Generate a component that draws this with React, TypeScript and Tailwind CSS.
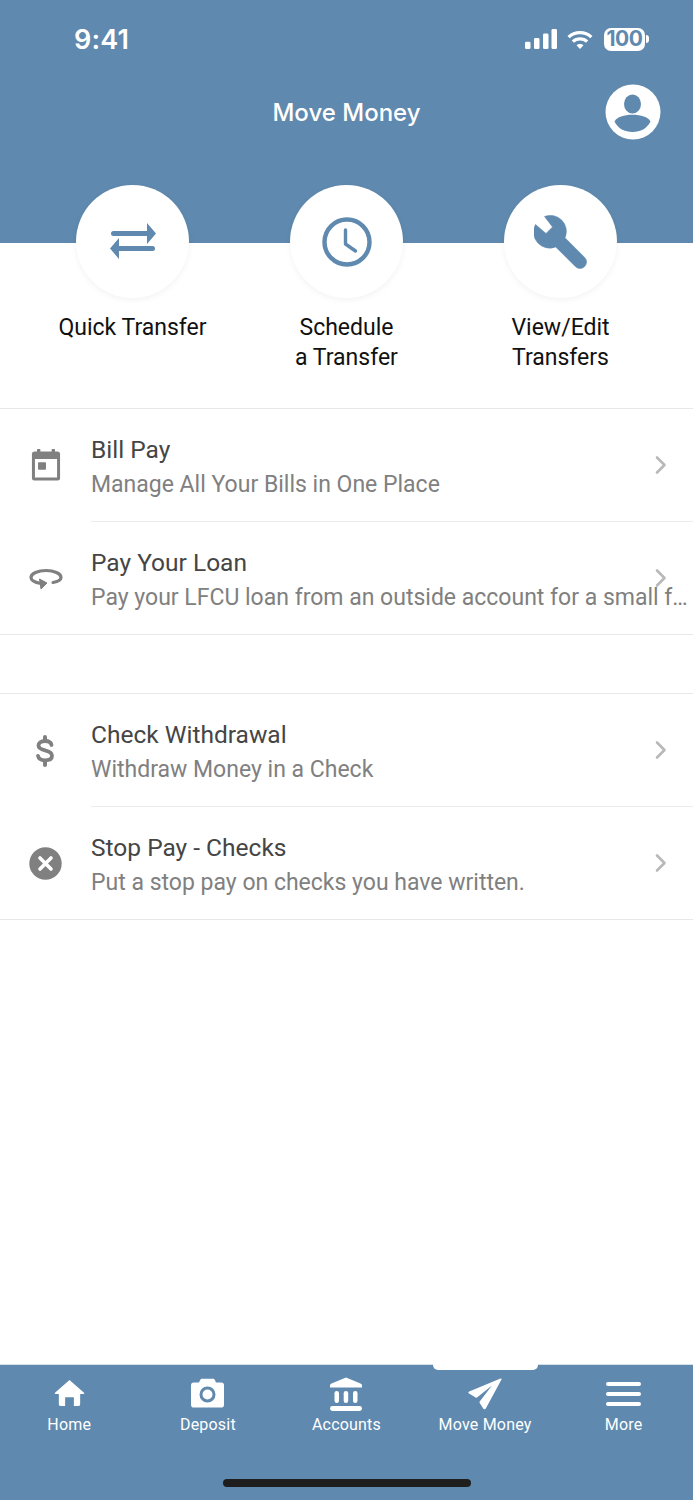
import React from "react";

const Chevron = ({ className = "" }: { className?: string }) => (
  <svg width="14" height="20" viewBox="0 0 14 20" className={className} fill="none" stroke="#b9b9b9" strokeWidth="2.6" strokeLinecap="round" strokeLinejoin="round">
    <path d="M3 2.5 L10.5 10 L3 17.5" />
  </svg>
);

const CalendarIcon = () => (
  <svg width="30" height="33" viewBox="0 0 32 34" className="-mt-[3px]">
    <path fill="#808080" fillRule="evenodd" d="M7 0.5h2.4a.6.6 0 0 1 .6.6V3h12V1.1a.6.6 0 0 1 .6-.6H25a.6.6 0 0 1 .6.6V3h3A2.6 2.6 0 0 1 31 5.6v26A2.4 2.4 0 0 1 28.6 34H3.4A2.4 2.4 0 0 1 1 31.6v-26A2.6 2.6 0 0 1 3.4 3h3V1.1a.6.6 0 0 1 .6-.6ZM4.2 11v19.8h23.6V11H4.2Z" />
    <rect x="7.5" y="14.5" width="8.5" height="8" rx="1" fill="#808080" />
  </svg>
);

const LoopIcon = () => (
  <svg width="34" height="22" viewBox="0 0 34 22" fill="none" className="mt-[2px]">
    <path d="M24 14.500C29 13.500 32 11.500 32 9.500 32 5.500 25 2.500 17 2.500S2 5.500 2 9.500C2 12.500 6 14.500 12 15.500" stroke="#808080" strokeWidth="3.200" strokeLinecap="round" />
    <path d="M10.500 11 L18 15 L12 21 Z" fill="#808080" stroke="#808080" strokeWidth="1" strokeLinejoin="round" />
  </svg>
);

const DollarIcon = () => (
  <svg width="20" height="32" viewBox="0 0 20 32" fill="none" className="mr-[2px]">
    <path d="M16.500 10C16 7.300 13.500 6 10 6 6 6 3.500 7.800 3.500 10.500c0 2.700 2.500 3.900 6.500 4.800 4.400 1 7 2.400 7 5.400 0 2.900-2.800 4.600-7 4.600-3.800 0-6.500-1.600-7-4.500" stroke="#808080" strokeWidth="3.800" strokeLinecap="round" />
    <path d="M10 2v4M10 26v4" stroke="#808080" strokeWidth="4" strokeLinecap="round" />
  </svg>
);

const CloseCircleIcon = () => (
  <svg width="33" height="33" viewBox="0 0 33 33">
    <circle cx="16.500" cy="16.500" r="16.200" fill="#808080" />
    <path d="M11 11 L22 22 M22 11 L11 22" stroke="#fff" strokeWidth="3.600" strokeLinecap="round" />
  </svg>
);

const TransferIcon = () => (
  <svg width="50" height="38" viewBox="0 0 48 38" fill="#5f89ae" className="-mt-[2px]">
    <rect x="2" y="9" width="40" height="5" rx="2.500" />
    <path d="M38 1 L47 11.500 L38 22 Z" strokeLinejoin="round" />
    <rect x="6" y="24" width="40" height="5" rx="2.500" />
    <path d="M10 16 L1 26.500 L10 37 Z" strokeLinejoin="round" />
  </svg>
);

const ClockIcon = () => (
  <svg width="50" height="50" viewBox="0 0 50 50" fill="none" stroke="#5f89ae">
    <circle cx="25" cy="25" r="22.500" strokeWidth="4.400" />
    <path d="M23.500 13 V27 L33.500 34" strokeWidth="3.400" strokeLinecap="round" strokeLinejoin="round" />
  </svg>
);

const WrenchIcon = () => (
  <svg width="54" height="54" viewBox="0 0 54 54" fill="#5f89ae">
    <path d="M10.500 1.500A16 16 0 0 1 31 22.800L50.600 42.400A6.500 6.500 0 0 1 41.400 51.600L21.700 31.900A16 16 0 0 1 1.500 9.500L12 18.500 18.500 12Z" stroke="#5f89ae" strokeWidth="0.600" strokeLinejoin="round" />
  </svg>
);

const UserAvatar = () => (
  <svg width="56" height="56" viewBox="0 0 56 56">
    <circle cx="28" cy="28" r="27.500" fill="#fff" />
    <ellipse cx="27.500" cy="20" rx="8.500" ry="9.500" fill="#5f89ae" />
    <path d="M9.500 37.500C12 33 19 30.800 27.500 30.800S43 33 45.500 37.500C42 44.500 35.500 48 27.500 48S13 44.500 9.500 37.500Z" fill="#5f89ae" />
  </svg>
);

const HomeIcon = () => (
  <svg width="31" height="28" viewBox="0 0 32 28" fill="#fff" className="-mt-[2px]">
    <path d="M16 .5 31 13.800c.5.500.2 1.200-.5 1.200H27v10.500A2 2 0 0 1 25 27.500h-4.500V18.500h-9v9H7a2 2 0 0 1-2-2V15H1.500C.8 15 .5 14.300 1 13.800Z" />
  </svg>
);

const CameraIcon = () => (
  <svg width="33" height="30" viewBox="0 0 33 30" className="-mt-[2px]">
    <path fill="#fff" d="M11 .8h11c1 0 1.700.6 2 1.500L25 4.500h5.200A2.800 2.800 0 0 1 33 7.300v19.500a2.800 2.800 0 0 1-2.800 2.800H2.800A2.800 2.800 0 0 1 0 26.800V7.300a2.800 2.800 0 0 1 2.800-2.800H8l1-2.200c.3-.9 1-1.500 2-1.500Z" />
    <circle cx="16.500" cy="16.500" r="6.500" fill="none" stroke="#5f89ae" strokeWidth="3" />
  </svg>
);

const BankIcon = () => (
  <svg width="32" height="34" viewBox="0 0 32 34" fill="#fff">
    <path d="M16 .5 30.500 6.500c1 .5 1.500 1 1.500 2.200v1.800H0V8.700c0-1.200.5-1.700 1.500-2.200Z" />
    <rect x="4.500" y="14" width="4.500" height="12" rx="2.200" />
    <rect x="13.700" y="14" width="4.500" height="12" rx="2.200" />
    <rect x="23" y="14" width="4.500" height="12" rx="2.200" />
    <rect x="0" y="29" width="32" height="5" rx="2.400" />
  </svg>
);

const SendIcon = () => (
  <svg width="34" height="32" viewBox="0 0 34 32" fill="#fff">
    <path d="M32.500.5c.8-.2 1.300.4 1 1.100L17.800 30.500c-.5 1-1.800 1.100-2.400.2L11.700 25c-.3-.5-.3-1 0-1.500L24 7.500 9 19.500c-.4.300-.9.400-1.400.1L1 15.600c-.9-.6-.8-1.800.2-2.200Z" />
  </svg>
);

const MenuIcon = () => (
  <svg width="35" height="24" viewBox="0 0 35 24" fill="#fff">
    <rect x="0" y="0" width="35" height="4" rx="2" />
    <rect x="0" y="10" width="35" height="4" rx="2" />
    <rect x="0" y="20" width="35" height="4" rx="2" />
  </svg>
);

const ListRow = ({ icon, title, subtitle, last }: { icon: React.ReactNode; title: string; subtitle: string; last?: boolean }) => (
  <div className={`relative flex items-center ${last ? "h-[112px]" : "h-[113px]"}`}>
    <div className="flex w-[91px] shrink-0 justify-center">{icon}</div>
    <div className={`flex h-full min-w-0 flex-1 flex-col justify-center ${last ? "pt-[4px]" : "border-b border-[#ececec] pt-[5px]"}`}>
      <div className="text-[24.5px] leading-[34px] text-[#454545]">{title}</div>
      <div className="mt-[1px] whitespace-nowrap text-[23px] leading-[34px] text-[#808080]">{subtitle}</div>
    </div>
    <Chevron className="absolute right-[25px] top-[46px]" />
  </div>
);

const Action = ({ icon, lines }: { icon: React.ReactNode; lines: string[] }) => (
  <div className="flex w-[214px] flex-col items-center">
    <div className="flex h-[113px] w-[113px] items-center justify-center rounded-full bg-white shadow-[0_2px_6px_rgba(0,0,0,0.05)]">{icon}</div>
    <div className="mt-[15px] text-center text-[23px] leading-[30px] text-[#111]">
      {lines.map((l) => (
        <div key={l}>{l}</div>
      ))}
    </div>
  </div>
);

const Tab = ({ icon, label, active }: { icon: React.ReactNode; label: string; active?: boolean }) => (
  <div className="relative flex w-[138.6px] flex-col items-center pt-[11px]">
    {active && <div className="absolute left-[17px] -top-px h-[6px] w-[105px] rounded-b-[5px] bg-white" />}
    <div className="flex h-[35px] items-center justify-center">{icon}</div>
    <div className="mt-[3px] text-[16px] leading-[22px] tracking-[0.2px] text-white">{label}</div>
  </div>
);

export default function App() {
  return (
    <div className="flex h-[1500px] w-[693px] flex-col overflow-hidden bg-white font-['Roboto',sans-serif]">
      <header className="h-[243px] shrink-0 bg-[#5f89ae]">
        <div className="flex h-[78px] items-center justify-between pl-[74px] pr-[44px]">
          <span className="pt-[3px] font-['Inter',sans-serif] text-[27px] font-semibold tracking-[0.2px] text-white">9:41</span>
          <div className="flex items-center">
            <svg width="32" height="20" viewBox="0 0 32 22" fill="#fff" preserveAspectRatio="none" className="mr-[10px]">
              <rect x="0" y="14" width="5.500" height="8" rx="1.500" />
              <rect x="9" y="10" width="5.500" height="12" rx="1.500" />
              <rect x="18" y="5" width="5.500" height="17" rx="1.500" />
              <rect x="26.500" y="0" width="5.500" height="22" rx="1.500" />
            </svg>
            <svg width="26" height="19" viewBox="0 0 27 20" fill="none" stroke="#fff" strokeWidth="3.400" className="mr-[11px]">
              <path d="M1.500 7.500C8 1.300 19 1.300 25.500 7.500" />
              <path d="M6 12.200C10 8.500 17 8.500 21 12.200" />
              <path d="M13.500 20 9.800 16c2-1.800 5.400-1.800 7.400 0Z" fill="#fff" stroke="none" />
            </svg>
            <div className="flex items-center gap-[1px]">
              <div className="flex h-[23px] w-[41px] items-center justify-center rounded-[7px] bg-white font-['Inter',sans-serif] text-[21px] font-bold tracking-[-0.5px] text-[#5f89ae]">100</div>
              <div className="h-[8px] w-[3px] rounded-r-full bg-white" />
            </div>
          </div>
        </div>
        <div className="relative flex h-[70px] items-center justify-center">
          <h1 className="font-['Inter',sans-serif] text-[24px] font-medium text-white">Move Money</h1>
          <div className="absolute right-[32px] top-[6px]">
            <UserAvatar />
          </div>
        </div>
      </header>

      <div className="-mt-[58px] flex justify-center">
        <Action icon={<TransferIcon />} lines={["Quick Transfer"]} />
        <Action icon={<ClockIcon />} lines={["Schedule", "a Transfer"]} />
        <Action icon={<WrenchIcon />} lines={["View/Edit", "Transfers"]} />
      </div>

      <section className="mt-[35px] border-y border-[#e8e8e8]">
        <ListRow icon={<CalendarIcon />} title="Bill Pay" subtitle="Manage All Your Bills in One Place" />
        <ListRow icon={<LoopIcon />} title="Pay Your Loan" subtitle="Pay your LFCU loan from an outside account for a small f…" last />
      </section>

      <section className="mt-[58px] border-y border-[#e8e8e8]">
        <ListRow icon={<DollarIcon />} title="Check Withdrawal" subtitle="Withdraw Money in a Check" />
        <ListRow icon={<CloseCircleIcon />} title="Stop Pay - Checks" subtitle="Put a stop pay on checks you have written." last />
      </section>

      <div className="flex-1" />

      <nav className="relative h-[136px] shrink-0 border-t border-[#d5dfe8] bg-[#5f89ae]">
        <div className="flex">
          <Tab icon={<HomeIcon />} label="Home" />
          <Tab icon={<CameraIcon />} label="Deposit" />
          <Tab icon={<BankIcon />} label="Accounts" />
          <Tab icon={<SendIcon />} label="Move Money" active />
          <Tab icon={<MenuIcon />} label="More" />
        </div>
        <div className="absolute bottom-[13px] left-[223px] h-[8px] w-[248px] rounded-full bg-[#1e1e1e]" />
      </nav>
    </div>
  );
}
